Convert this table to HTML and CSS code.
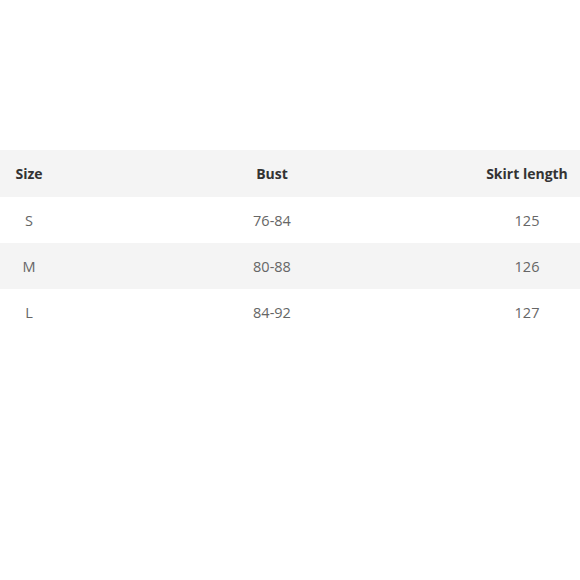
FILE: index.html
```html
<!DOCTYPE html>
<html>
<head>
<meta charset="utf-8">
<link rel="stylesheet" href="styles.css">
</head>
<body>
<div class="page">
  <div class="table">
    <div class="row head">
      <div class="cell c1">Size</div>
      <div class="cell c2">Bust</div>
      <div class="cell c3">Skirt length</div>
    </div>
    <div class="row">
      <div class="cell c1">S</div>
      <div class="cell c2">76-84</div>
      <div class="cell c3">125</div>
    </div>
    <div class="row alt">
      <div class="cell c1">M</div>
      <div class="cell c2">80-88</div>
      <div class="cell c3">126</div>
    </div>
    <div class="row">
      <div class="cell c1">L</div>
      <div class="cell c2">84-92</div>
      <div class="cell c3">127</div>
    </div>
  </div>
</div>
</body>
</html>
```
FILE: styles.css
```css
html, body {
  margin: 0;
  padding: 0;
  background: #ffffff;
}
.page {
  width: 580px;
  height: 580px;
  padding-top: 150px;
  box-sizing: border-box;
  font-family: "Open Sans", "Noto Sans", sans-serif;
}
.table {
  display: flex;
  flex-direction: column;
}
.row {
  display: grid;
  grid-template-columns: 58px 428px 94px;
  height: 46px;
  align-items: center;
  font-size: 14.5px;
  color: #666666;
}
.row.head {
  background: #f4f4f4;
  color: #333333;
  font-weight: 700;
  font-size: 14px;
  height: 47px;
}
.row.alt {
  background: #f4f4f4;
}
.cell {
  text-align: center;
  white-space: nowrap;
}
.c3 {
  display: flex;
  justify-content: center;
  padding-right: 12px;
}
```
